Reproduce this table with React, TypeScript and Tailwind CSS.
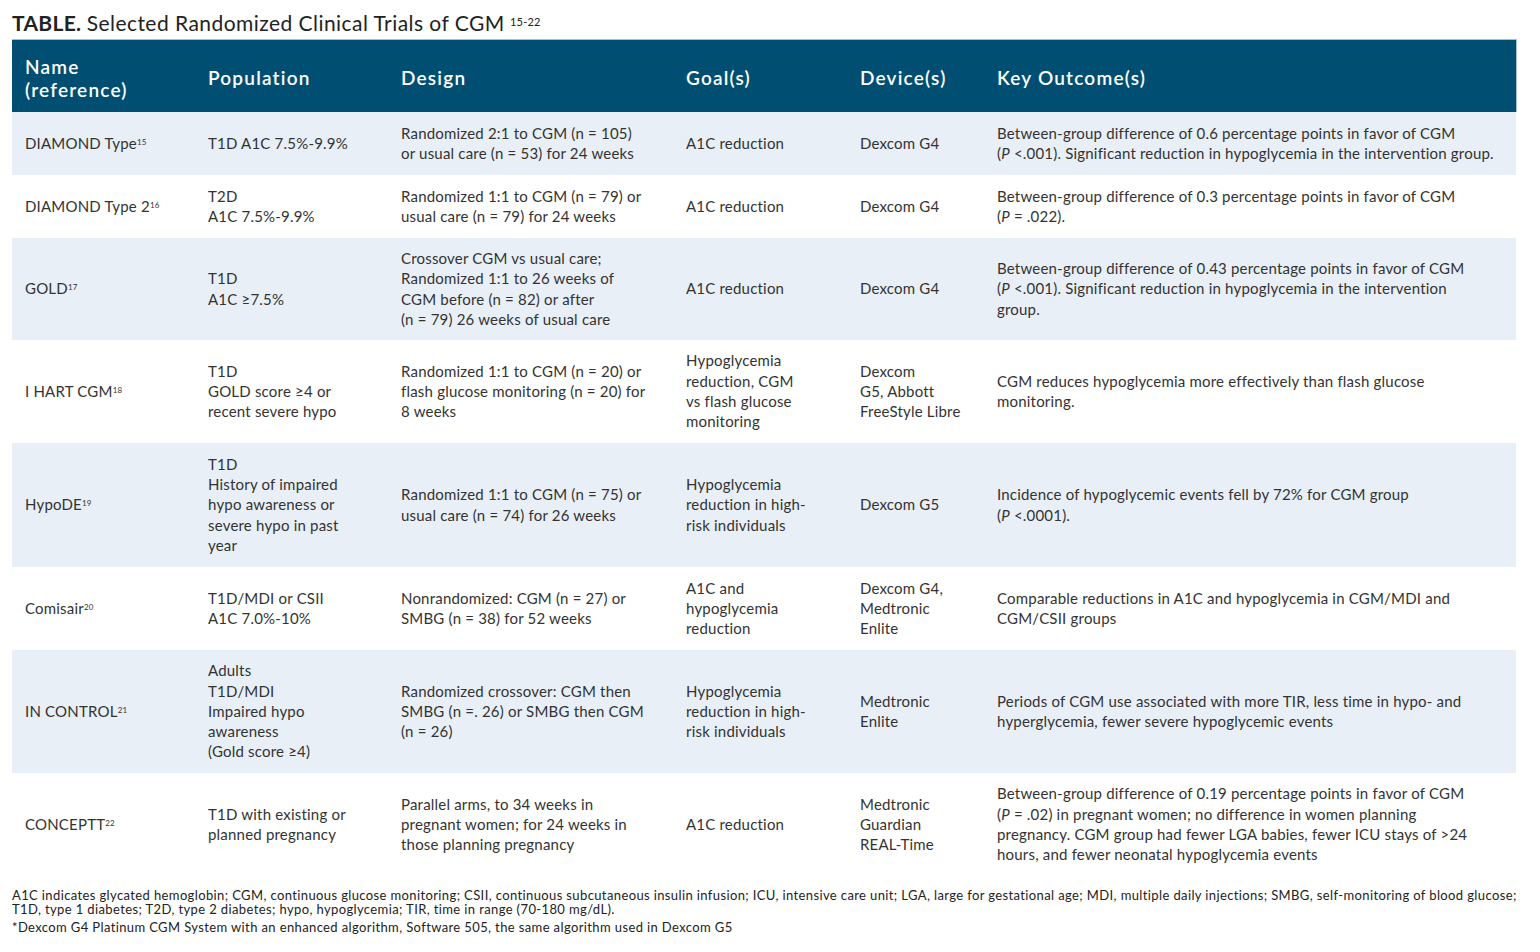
import React from "react";

type Row = {
  name: string;
  ref: string;
  population: string[];
  design: string[];
  goals: string[];
  devices: string[];
  outcome: string[];
  height: string;
};

const rows: Row[] = [
  {
    name: "DIAMOND Type",
    ref: "15",
    population: ["T1D A1C 7.5%-9.9%"],
    design: ["Randomized 2:1 to CGM (n = 105)", "or usual care (n = 53) for 24 weeks"],
    goals: ["A1C reduction"],
    devices: ["Dexcom G4"],
    outcome: [
      "Between-group difference of 0.6 percentage points in favor of CGM",
      "(P <.001). Significant reduction in hypoglycemia in the intervention group.",
    ],
    height: "h-[63px]",
  },
  {
    name: "DIAMOND Type 2",
    ref: "16",
    population: ["T2D", "A1C 7.5%-9.9%"],
    design: ["Randomized 1:1 to CGM (n = 79) or", "usual care (n = 79) for 24 weeks"],
    goals: ["A1C reduction"],
    devices: ["Dexcom G4"],
    outcome: ["Between-group difference of 0.3 percentage points in favor of CGM", "(P = .022)."],
    height: "h-[63px]",
  },
  {
    name: "GOLD",
    ref: "17",
    population: ["T1D", "A1C ≥7.5%"],
    design: [
      "Crossover CGM vs usual care;",
      "Randomized 1:1 to 26 weeks of",
      "CGM before (n = 82) or after",
      "(n = 79) 26 weeks of usual care",
    ],
    goals: ["A1C reduction"],
    devices: ["Dexcom G4"],
    outcome: [
      "Between-group difference of 0.43 percentage points in favor of CGM",
      "(P <.001). Significant reduction in hypoglycemia in the intervention",
      "group.",
    ],
    height: "h-[102px]",
  },
  {
    name: "I HART CGM",
    ref: "18",
    population: ["T1D", "GOLD score ≥4 or", "recent severe hypo"],
    design: ["Randomized 1:1 to CGM (n = 20) or", "flash glucose monitoring (n = 20) for", "8 weeks"],
    goals: ["Hypoglycemia", "reduction, CGM", "vs flash glucose", "monitoring"],
    devices: ["Dexcom", "G5, Abbott", "FreeStyle Libre"],
    outcome: ["CGM reduces hypoglycemia more effectively than flash glucose", "monitoring."],
    height: "h-[103px]",
  },
  {
    name: "HypoDE",
    ref: "19",
    population: ["T1D", "History of impaired", "hypo awareness or", "severe hypo in past", "year"],
    design: ["Randomized 1:1 to CGM (n = 75) or", "usual care (n = 74) for 26 weeks"],
    goals: ["Hypoglycemia", "reduction in high-", "risk individuals"],
    devices: ["Dexcom G5"],
    outcome: ["Incidence of hypoglycemic events fell by 72% for CGM group", "(P <.0001)."],
    height: "h-[124px]",
  },
  {
    name: "Comisair",
    ref: "20",
    population: ["T1D/MDI or CSII", "A1C 7.0%-10%"],
    design: ["Nonrandomized: CGM (n = 27) or", "SMBG (n = 38) for 52 weeks"],
    goals: ["A1C and", "hypoglycemia", "reduction"],
    devices: ["Dexcom G4,", "Medtronic", "Enlite"],
    outcome: ["Comparable reductions in A1C and hypoglycemia in CGM/MDI and", "CGM/CSII groups"],
    height: "h-[83px]",
  },
  {
    name: "IN CONTROL",
    ref: "21",
    population: ["Adults", "T1D/MDI", "Impaired hypo", "awareness", "(Gold score ≥4)"],
    design: ["Randomized crossover: CGM then", "SMBG (n =. 26) or SMBG then CGM", "(n = 26)"],
    goals: ["Hypoglycemia", "reduction in high-", "risk individuals"],
    devices: ["Medtronic", "Enlite"],
    outcome: [
      "Periods of CGM use associated with more TIR, less time in hypo- and",
      "hyperglycemia, fewer severe hypoglycemic events",
    ],
    height: "h-[123px]",
  },
  {
    name: "CONCEPTT",
    ref: "22",
    population: ["T1D with existing or", "planned pregnancy"],
    design: ["Parallel arms, to 34 weeks in", "pregnant women; for 24 weeks in", "those planning pregnancy"],
    goals: ["A1C reduction"],
    devices: ["Medtronic", "Guardian", "REAL-Time"],
    outcome: [
      "Between-group difference of 0.19 percentage points in favor of CGM",
      "(P = .02) in pregnant women; no difference in women planning",
      "pregnancy. CGM group had fewer LGA babies, fewer ICU stays of >24",
      "hours, and fewer neonatal hypoglycemia events",
    ],
    height: "h-[103px]",
  },
];

// lines that open with "(P" get an italic P
const Line = ({ text }: { text: string }) => {
  if (text.startsWith("(P ")) {
    return (
      <span className="block whitespace-nowrap">
        (<i>P</i>
        {text.slice(2)}
      </span>
    );
  }
  return <span className="block whitespace-nowrap">{text}</span>;
};

const Cell = ({ lines }: { lines: string[] }) => (
  <td className="pl-[13px] pr-2 align-middle">
    {lines.map((l, i) => (
      <Line key={i} text={l} />
    ))}
  </td>
);

const headers = [["Name", "(reference)"], ["Population"], ["Design"], ["Goal(s)"], ["Device(s)"], ["Key Outcome(s)"]];

export default function App() {
  return (
    <div className="min-h-screen bg-white font-['Lato',sans-serif] text-[#333]">
      <div className="ml-3 w-[1504px] pt-[9px]">
        <h1 className="text-[21px] leading-[28px] text-[#222]">
          <span className="font-bold tracking-[0.3px]">TABLE.</span>{" "}
          <span className="tracking-[0.45px]">Selected Randomized Clinical Trials of CGM</span>{" "}
          <sup className="text-[11px] tracking-[0.2px]">15-22</sup>
        </h1>

        <table className="mt-[2px] w-[1504px] table-fixed border-collapse text-[15px] leading-[20.3px] tracking-[0.2px]">
          <colgroup>
            <col className="w-[183px]" />
            <col className="w-[193px]" />
            <col className="w-[285px]" />
            <col className="w-[174px]" />
            <col className="w-[137px]" />
            <col className="w-[532px]" />
          </colgroup>
          <thead>
            <tr className="h-[72px] border-t border-r border-[#a8bfcf] bg-[#004f73] text-white">
              {headers.map((h, i) => (
                <th
                  key={i}
                  className="pl-[13px] pt-[4px] text-left align-middle text-[19px] font-semibold leading-[23px] tracking-[1.2px]"
                >
                  {h.map((t) => (
                    <span key={t} className="block whitespace-nowrap">
                      {t}
                    </span>
                  ))}
                </th>
              ))}
            </tr>
          </thead>
          <tbody>
            {rows.map((r, i) => (
              <tr key={r.name} className={`${r.height} ${i % 2 === 0 ? "bg-[#e8eff7]" : "bg-white"}`}>
                <td className="pl-[13px] align-middle whitespace-nowrap">
                  {r.name}
                  <sup className="text-[8px]">{r.ref}</sup>
                </td>
                <Cell lines={r.population} />
                <Cell lines={r.design} />
                <Cell lines={r.goals} />
                <Cell lines={r.devices} />
                <Cell lines={r.outcome} />
              </tr>
            ))}
          </tbody>
        </table>

        <div className="mt-[12px] text-[13px] leading-[14px] tracking-[0.38px] text-[#222]">
          <p className="whitespace-nowrap">
            A1C indicates glycated hemoglobin; CGM, continuous glucose monitoring; CSII, continuous subcutaneous insulin
            infusion; ICU, intensive care unit; LGA, large for gestational age; MDI, multiple daily injections; SMBG,
            self-monitoring of blood glucose;
          </p>
          <p className="whitespace-nowrap">
            T1D, type 1 diabetes; T2D, type 2 diabetes; hypo, hypoglycemia; TIR, time in range (70-180 mg/dL).
          </p>
          <p className="mt-[4px] whitespace-nowrap">
            *Dexcom G4 Platinum CGM System with an enhanced algorithm, Software 505, the same algorithm used in Dexcom G5
          </p>
        </div>
      </div>
    </div>
  );
}
